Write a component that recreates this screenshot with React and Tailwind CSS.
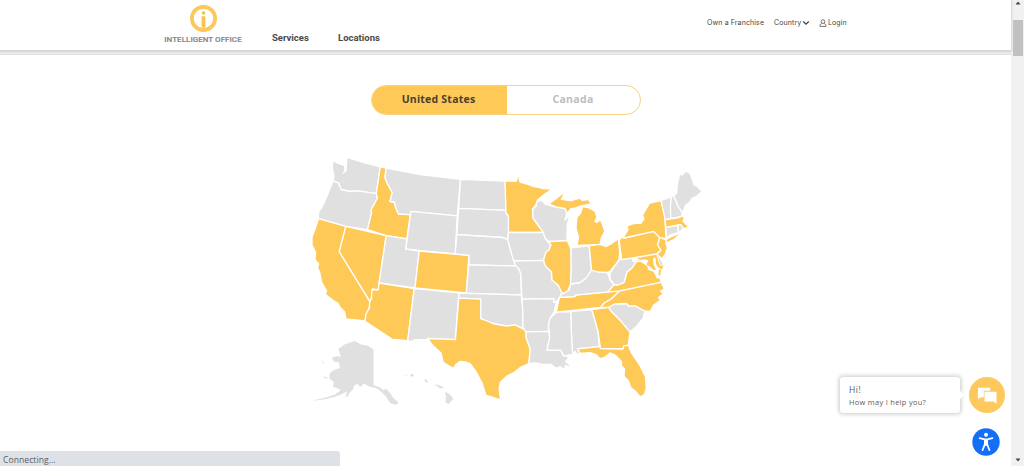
import React from "react";

const ON = "#ffc957";
const OFF = "#e0e0e0";

const STATES = [
  { id: "WA", d: "333 160.5 338 163.5 344.5 165.5 345 171 343 173 346 171 346.8 157.5 360 161.500 380.3 166.8 376.3 193.6 358 190.8 350 191.5 341 189.5 338.5 183 333 180.8 334 176 332.2 168" },
  { id: "OR", d: "333 180.8 338.5 183 341 189.5 350 191.5 358 190.8 376.3 193.6 377.5 198 371 210 371.5 213 367.5 229.6 345.8 226.4 318.5 218.7 318.5 212.5 323.6 204 327 196" },
  { id: "CA", on: true, d: "318.5 218.7 345.8 226.4 339.3 251.7 370.3 302.5 369 308 366 314 365 320.9 346 319 344.7 312 340 307.3 338 303.3 333 300.3 325.3 294.3 326.6 291 321.6 282 319.6 272 317.6 268 318.6 264 315 260 315.6 252 312 245 312 237 315.500 228" },
  { id: "NV", on: true, d: "345.8 226.4 386.2 235.7 378.2 290 372.5 289 370.6 302.5 339.3 251.7" },
  { id: "ID", on: true, d: "380.3 166.8 386 168 385 178 387.5 184 392.3 192.5 390 201.5 394.5 202 395.5 207 398.5 214 410.3 214.6 406.9 238.8 386.2 235.7 367.5 229.6 371.5 213 371 210 377.5 198 376.3 193.6" },
  { id: "MT", d: "386 168 420 174.6 460.5 179.4 457.2 215.8 411 211.4 410.3 214.6 398.5 214 395.5 207 394.5 202 390 201.5 392.3 192.5 387.5 184 385 178" },
  { id: "WY", d: "411 211.4 457.2 215.8 455.2 253.8 405.6 249.2" },
  { id: "UT", d: "386.2 235.7 406.9 238.8 405.6 249.2 419.2 251 415 288 379 283" },
  { id: "CO", on: true, d: "419.2 251 468.9 255.4 466.3 292.9 415 288" },
  { id: "AZ", on: true, d: "379 283 414.2 288.5 407.7 340.6 392.3 339.4 365 321.4 366 314 369.5 308 369.5 303 371.6 298 372 289.5 378.2 290" },
  { id: "NM", d: "414.2 288.5 458.8 292.8 455.4 339.6 427.7 338.3 428 340 414 339.6 413.5 341.5 407.7 340.9" },
  { id: "ND", d: "460.5 179.4 505 181.2 507 210.4 458.7 208.3" },
  { id: "SD", d: "458.7 208.3 507 210.4 506 213 508.5 216 508.5 232.5 507.8 239.6 502 237.4 495 237 456.8 234.7" },
  { id: "NE", d: "456.8 234.7 495 237 502 237.4 507.8 239.6 511.7 254 515.8 265.9 469.1 264.9 468.9 255.4 455.2 253.8" },
  { id: "KS", d: "468.6 264.9 515.8 265.9 519 269 520.8 274 521.3 295 466.3 293.4" },
  { id: "OK", d: "458.8 293 521.3 295 522.8 310 523 328 515 325 507 326 500 325 493 323.5 487 321 480.6 318.7 480.6 299.1 458.8 298.2" },
  { id: "TX", on: true, d: "458.8 298.2 480.6 299.1 480.6 318.7 487 321 493 323.5 500 325 507 326 515 325 526 330.5 526.2 338 530.2 349 528.9 363.6 521 367 514 372.500 507 376 500.5 382 499 388 500.6 399.8 492 397 486 395.5 482 383 476.5 372.500 470 363.5 466 362 460 361.5 456 364.500 453.3 368.3 446.600 364.500 443 362 441 353 433.6 346.300 427.5 338.6 455.4 339.6" },
  { id: "MN", on: true, d: "505 181.2 516.6 181 517.4 176.500 518.8 176.500 520 182.2 529 184.600 533 186.300 539 187.4 543 188.600 552 189.2 544.5 194.3 537.3 200.3 536.5 204 532.7 209 533 218 538 225 543.3 232.4 508.5 232.5 508.5 216 506 213" },
  { id: "IA", d: "508.5 232.5 543.3 232.4 545 238 550.7 245 549 250 546 252 543.3 260.4 513.6 261 511.7 254 507.8 239.6" },
  { id: "MO", d: "513.6 261 543.3 260.4 545.5 266 551.5 272 552 280 558.5 285.5 561.7 292.5 560 297 556.5 302 553.5 302 554 298.7 522 299.2 520.8 274 519 269 515.8 265.9" },
  { id: "AR", d: "522 299.2 554 298.7 553.5 302 556.5 302 554 312 550 318.3 548.5 325 548.6 331.4 526 331.9 523 328 522.8 310" },
  { id: "LA", d: "526 331.9 548.6 331.4 549.7 338 547 350 560.9 350.2 563 355.5 568 356 568 359 565.5 361.500 570.5 365.5 568 367 565.5 365.3 564.5 369.3 560 366.8 556 368.300 551 364.5 543 364.5 536 363 528.9 363.6 530.2 349 526.2 338" },
  { id: "MS", d: "556.3 312.2 571 311.6 571.5 333 572.7 354.5 564 356 560.9 350.2 547 350 549.7 338 548.5 325 550 318.3" },
  { id: "AL", d: "571 311.6 591.9 309.7 598 331 599.2 346.6 577.8 348.6 579.7 352.4 577 355 575.3 351.5 572.7 354.5 571.5 333" },
  { id: "GA", on: true, d: "591.9 309.7 608.5 307.3 611 311 620 320 630 331.7 628.3 345.3 623.8 345.8 623 349 600.5 348.5 598 331" },
  { id: "FL", on: true, d: "577.8 348.8 599.2 346.6 600.5 348.5 623 349 623.8 345.8 628.3 345.2 631.5 353 640.5 366.5 645.5 377 646.3 388 644.5 394.5 640 397 635.6 391.4 630.6 387.3 628.6 381.3 624 376.3 624.5 369 621.5 366 621.5 361.5 615 355 610 352.9 605 357 600 358.6 596 354.6 590 352.6 580 353.5" },
  { id: "SC", d: "608.5 307.3 615 303.8 626.5 303.5 628.5 305.8 635.3 305.9 645 311 643 318.3 636.4 326.4 629.9 331.9 620 320 611 311" },
  { id: "NC", on: true, d: "619.6 290.8 661 282.2 664.4 289 660.5 291 663.5 294 658.5 297.300 660.4 300.3 653.4 305.4 650.3 311.5 644.5 311 635.3 305.9 628.5 305.8 626.5 303.5 615 303.8 608.5 307.3 600.4 307.5 604 303 611 299" },
  { id: "TN", on: true, d: "559.3 297.4 575 296.5 575 295.2 619.6 290.8 611 299 604 303 600.4 307.5 556.4 312.2" },
  { id: "KY", d: "561.5 294 569 290.5 570.5 284 580 282.5 586 278 591.5 270 598 272 607 271.6 610 280 614.3 284.5 608 291.8 575 295.2 575 296.5 560 297.4" },
  { id: "VA", on: true, d: "608 291.8 614.3 284.5 618 285 624 282.5 627 272 632 268 636.5 261.5 641 261.2 648 266 648.5 269.500 654 271.5 657 277.5 660 278 661.3 282.2 619.6 290.8" },
  { id: "WV", d: "619.7 252 621.8 259.6 632 257.8 633.5 262 638 259 642 258.500 641 261.2 636.5 261.5 632 268 627 272 624 282.5 618 285 614.3 284.5 610 279 610.3 273 616 264 620 259" },
  { id: "IL", on: true, d: "549 241.7 567.4 240.7 570.9 249 571.2 271 570.5 284 568 290.5 563.5 293.5 561.7 292.5 558.5 285.5 552 280 551.5 272 545.5 266 543.6 260.4 546 252 549 250 551 245" },
  { id: "WI", d: "536.5 202 542 200.300 545 204 556 207 564.5 208.5 566.800 213 565 220 570.5 214 567.300 224 567 240.4 549 241.4 545 238 543.3 232.4 538 225 533 218 532.7 209 536.5 206" },
  { id: "MI-UP", on: true, thin: true, d: "550 203.8 556 199.5 563.5 193.5 560.500 199.8 565 200.6 571 201.6 576 199.8 580 199 582 201 588.3 200.3 590 203.5 580 205.5 575 207.5 570.5 208 567.5 212 565.5 208 556 206.2" },
  { id: "MI", on: true, d: "582.500 206.7 588 207.5 595 211.2 597 217 595 221.5 596.5 222.5 600.7 219.7 604.8 231 601.3 238 600 244.5 577 245.5 578.5 237 576 228 577 217 580.5 213.500" },
  { id: "IN", d: "571 247.8 589 245.8 591.5 270 586 278 580 282.5 570.5 284 571.2 271" },
  { id: "OH", on: true, d: "589.3 245.8 600 244.3 606 246.5 611 244 618.3 238.8 619.7 252 619 260 616 264 610.3 271 607 272.5 598 272 591.5 270" },
  { id: "PA", on: true, d: "619 239.8 623.5 236.8 624 238.2 653.7 231.4 659.8 237.5 657.6 245 661 250 656.5 254 621.8 259.6" },
  { id: "NY", on: true, d: "623.5 236.8 628 230 627 226 634 223.5 641.2 223 644 219 642.6 215 649.7 203 661 200.5 664.8 216 666 238.8 659.8 237.5 653.7 231.4 624 238" },
  { id: "LI", on: true, thin: true, d: "666.5 240 671 237.5 678.5 234.5 674 238.8 667 242" },
  { id: "NJ", on: true, d: "659.8 237.5 666 239.8 666 243 667.4 248 665.4 254 662 258.800 657 254.5 661 250 657.6 245" },
  { id: "VT", d: "661 200.5 671.4 197 670.5 205 670.7 218.6 665.2 219.6" },
  { id: "NH", d: "671.4 197 673.5 195 678 206 682.3 213 681.3 216.5 670.7 218.6 670.5 205" },
  { id: "ME", d: "673.8 195.5 676.8 193 677.2 185 679.7 174 682 175 686 171 690.3 173.6 694 184.8 697.4 186.6 702 191.5 696.4 196.4 692.4 198 689.4 202.4 685.3 205.4 682.8 213 678 206" },
  { id: "MA", on: true, d: "665 219.8 679 217.5 682.2 216 684.5 218 683 221 685.3 223.6 688.6 226.8 684 228.7 680 224.6 665.8 227.3" },
  { id: "CT", d: "665.9 227.6 677.7 225.3 678.5 232.4 670 234.9 666.5 238.3" },
  { id: "RI", d: "677.7 225.3 681 224.6 683.3 229 678.5 232.4" },
  { id: "MD", on: true, thin: true, d: "637 258 656.3 254.8 659.8 265.8 663.3 265.5 662 269.5 658.500 267.500 656 264 655.8 259 654.3 257 653 260 653.5 264.500 656 269.5 654 270.3 650 266.500 646.5 264.500 648.5 260.3 645 259.500 641 259.8" },
  { id: "DE", thin: true, d: "657.2 254.8 658.5 256.5 661 261 663.2 264.5 660.3 265" },
  { id: "VA-E", on: true, thin: true, d: "659 269.5 661.2 270 659.7 276.5 658.5 274.5" },
  { id: "AK", thin: true, d: "355 341 361 344.5 368 345.8 373.5 349.5 373.5 385 380 387.5 384 390.500 386 388.500 390 393 393 397.500 398.5 402.7 396 405 390 403 386 396.500 381 391.5 376 388 369 386.5 364 383.5 360 387 358 384 354 385.500 353 389.500 348 394.5 345.5 396 347 391.500 342 394 335 396.8 325 399.3 315 400.5 308.7 402.3 316 399.8 327 397.3 335 394.5 341 390 337 388 333 386.8 334 382 329.5 378.8 329.500 374 333 370.500 340 368 339 362.500 334 361.5 331.8 357.5 338 356 341 357 338.3 349 345 344.300" },
  { id: "HI-0", thin: true, d: "405.500 375.5 407.3 375.3 407 376.8" },
  { id: "HI-1", thin: true, d: "410 374.7 413 373.8 414 376 411 376.7" },
  { id: "HI-2", thin: true, d: "424.3 378.7 426.7 380 428.5 382.5 425 382" },
  { id: "HI-3", thin: true, d: "433.500 384.6 438 384.8 443.5 387 442 388.8 438.5 387.6 437 386" },
  { id: "HI-4", thin: true, d: "444.800 391.8 449 393.8 453.3 398.8 448.5 404.3 445.3 402 446 396" },
  { id: "AK-2", thin: true, d: "321.3 360.5 325.5 363.7 323 363" },
  { id: "AK-3", thin: true, d: "323.5 376.3 328 377.7 325.5 379" },
  { id: "AK-4", thin: true, d: "345 397 349.500 393.500 348 396.5" },
];

function UsMap() {
  return (
    <svg viewBox="300 150 410 260" className="block h-[260px] w-[410px]" role="img" aria-label="United States">
      {STATES.map((s) => (
        <polygon
          key={s.id}
          points={s.d}
          fill={s.on ? ON : OFF}
          stroke={s.thin ? "none" : "#fff"}
          strokeWidth="1.3"
          strokeLinejoin="round"
        />
      ))}
    </svg>
  );
}

function Logo() {
  return (
    <div className="flex w-[78px] flex-col items-center pt-[5px]">
      <svg viewBox="0 0 28 28" className="block h-[28px] w-[28px]">
        <circle cx="14.500" cy="13.4" r="11.6" fill="#fff" stroke="#fbc959" strokeWidth="3.8" />
        <circle cx="14.500" cy="8" r="1.800" fill="#f9bd4b" />
        <path d="M12.600 11.300h3.800v10.200l-1.900 1.800-1.900-1.800z" fill="#fbc24d" />
      </svg>
      <span className="mt-[1px] whitespace-nowrap text-[8px] leading-[11px] font-medium tracking-[0.04px] text-[#858585] [-webkit-text-stroke:0.15px_#858585]">
        INTELLIGENT OFFICE
      </span>
    </div>
  );
}

function Header() {
  return (
    <header className="relative h-[50px] w-full shrink-0 bg-white pl-[164px] font-['Roboto',sans-serif] shadow-[0_1px_2px_1px_#d3d3d3]">
      <div className="flex h-full items-start">
        <Logo />
        <nav className="flex pt-[31px] text-[9.5px] leading-[13px] font-bold text-[#4a4a4a]">
          <span className="ml-[30px] w-[66px]">Services</span>
          <span className="w-[50px]">Locations</span>
        </nav>
        <div className="ml-[319px] flex pt-[18px] font-['Inter',sans-serif] text-[7px] leading-[10px] text-[#444]">
          <span className="w-[67px] whitespace-nowrap tracking-[0.12px]">Own a Franchise</span>
          <span className="flex w-[45px] items-center tracking-[0.1px]">
            Country
            <svg viewBox="0 0 8 6" className="ml-[1px] h-[6px] w-[8px]">
              <path d="M1.2 1.5 4 4.2 6.8 1.5" fill="none" stroke="#444" strokeWidth="1.3" />
            </svg>
          </span>
          <span className="flex items-center tracking-[0.1px]">
            <svg viewBox="0 0 8 8" className="mr-[1px] h-[8px] w-[8px]">
              <circle cx="4" cy="2.6" r="1.9" fill="none" stroke="#555" strokeWidth="0.8" />
              <path d="M2.8 4.6C1.4 5 .9 5.8.9 7.4h6.2c0-1.600-.5-2.400-1.900-2.800" fill="none" stroke="#555" strokeWidth="0.8" />
            </svg>
            Login
          </span>
        </div>
      </div>
    </header>
  );
}

function CountryToggle() {
  return (
    <div className="ml-[371px] flex h-[30px] w-[270px] overflow-hidden rounded-full border border-[#fad183] font-['Open_Sans',sans-serif] text-[10.5px] font-bold">
      <button className="h-full w-[135px] bg-[#ffc957] pr-[2px] tracking-[0.22px] text-[#4a4130]">United States</button>
      <button className="h-full flex-1 pr-[1px] tracking-[0.3px] text-[#bdbdbd]">Canada</button>
    </div>
  );
}

function Scrollbar() {
  return (
    <div className="flex h-full w-[13px] shrink-0 flex-col items-center bg-[#f1f1f1]">
      <svg viewBox="0 0 6 4" className="mt-[1px] h-[4px] w-[6px]"><path d="M3 .5 5.500 3.500h-5z" fill="#444" /></svg>
      <div className="mt-[15px] h-[36px] w-[10px] bg-[#c1c1c1]" />
      <div className="flex-1" />
      <svg viewBox="0 0 6 4" className="mb-[4px] h-[4px] w-[6px]"><path d="M3 3.500 5.500.5h-5z" fill="#444" /></svg>
    </div>
  );
}

function ChatWidget() {
  return (
    <div className="absolute right-[19px] bottom-[53px] flex h-[37px] items-center">
      <div className="relative h-[36px] w-[120px] rounded-[3px] bg-white pt-[6px] pl-[9px] font-['Open_Sans',sans-serif] text-[#5a5a5a] shadow-[0_0_4px_1px_rgba(0,0,0,0.22)]">
        <p className="text-[8.5px] leading-[13px] tracking-[0.5px]">Hi!</p>
        <p className="whitespace-nowrap text-[7.4px] leading-[13px] tracking-[0.32px]">How may I help you?</p>
        <span className="absolute top-[15px] -right-[3px] h-[6px] w-[6px] rotate-45 bg-white" />
      </div>
      <svg viewBox="0 0 36 36" className="ml-[9px] h-[36px] w-[36px]">
        <circle cx="18" cy="18" r="18" fill="#fdc95c" />
        <path d="M9 10.700h12.300v3h-6.500v6.500h-2.800l-2.700 2.300V20H8.800z" fill="#fff" />
        <path d="M15.500 14.700h12v12l-2.800-2.300h-9.200z" fill="#fff" />
      </svg>
    </div>
  );
}

function AccessibilityButton() {
  return (
    <svg viewBox="0 0 28 28" className="absolute right-[24px] bottom-[10px] h-[28px] w-[28px]">
      <circle cx="14" cy="14" r="13.7" fill="#146ff8" />
      <circle cx="14" cy="6.700" r="2" fill="#fff" />
      <path d="M7.700 10.200 12.500 11.300h3l4.800-1.100M14 11.500v5.500M12.900 11.500v4.500l-2.300 6M15.100 11.500v4.500l2.300 6" fill="none" stroke="#fff" strokeWidth="1.800" strokeLinecap="round" strokeLinejoin="round" />
    </svg>
  );
}

export default function App() {
  return (
    <div className="relative flex h-[466px] w-[1024px] overflow-hidden bg-white">
      <div className="flex h-full w-[1011px] flex-col">
        <Header />
        <div className="h-[5px] shrink-0 border-b border-[#e0e0e0] bg-[#efefef]" />
        <main className="flex flex-col pt-[30px]">
          <CountryToggle />
          <div className="mt-[35px] ml-[300px]">
            <UsMap />
          </div>
        </main>
      </div>
      <Scrollbar />
      <ChatWidget />
      <AccessibilityButton />
      <div className="absolute bottom-0 left-0 h-[15px] w-[340px] rounded-tr-[3px] bg-[#dee1e6] pl-[3px] font-['Open_Sans',sans-serif] text-[8.6px] leading-[18px] tracking-[0.05px] text-[#5a5e64]">
        Connecting...
      </div>
    </div>
  );
}
